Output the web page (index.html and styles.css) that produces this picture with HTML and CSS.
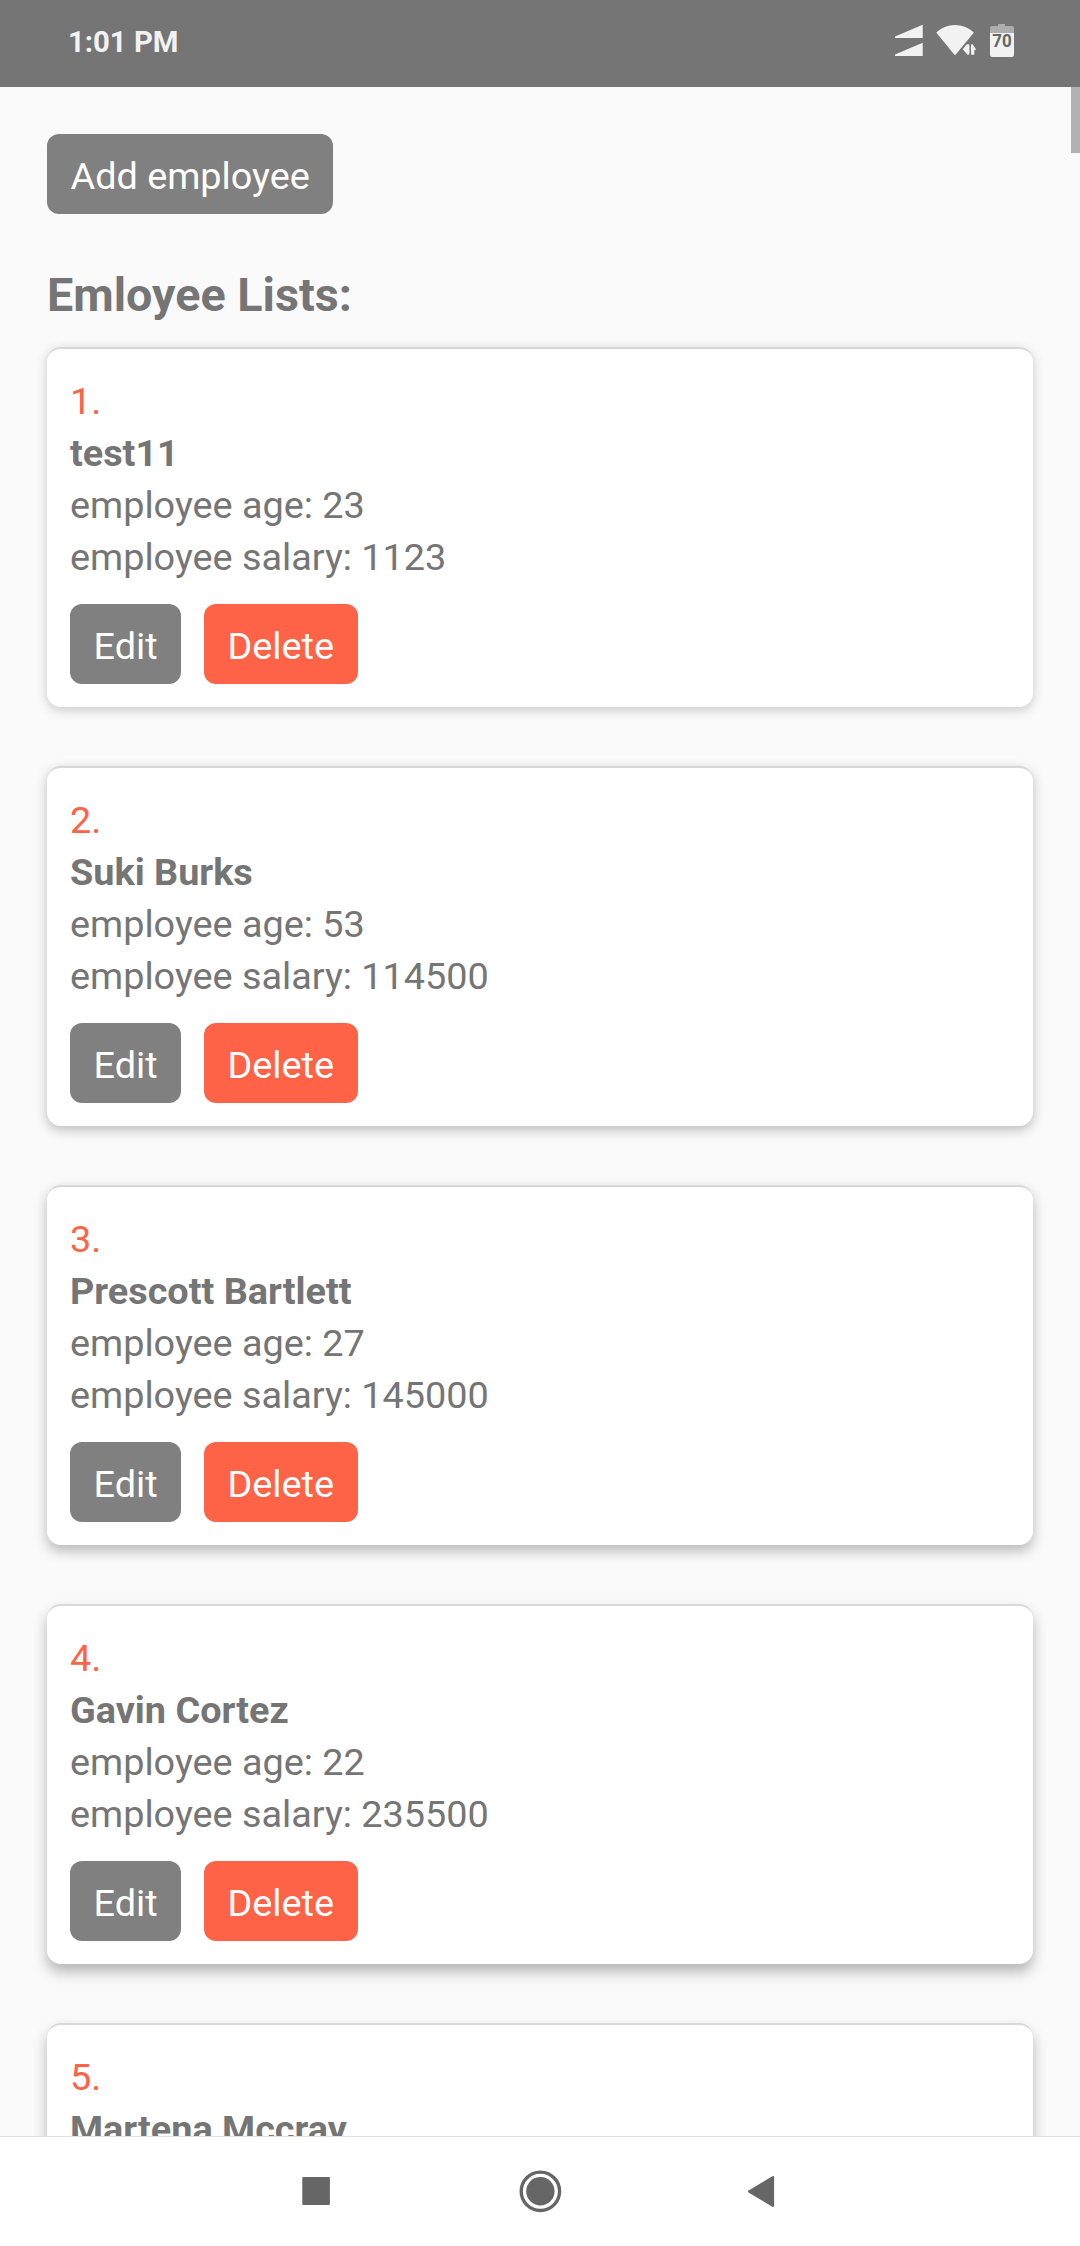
FILE: index.html
```html
<!DOCTYPE html>
<html lang="en">
<head>
<meta charset="utf-8">
<title>Employees</title>
<link rel="stylesheet" href="styles.css">
</head>
<body>
<header class="status">
  <span class="clock">1:01 PM</span>
  <svg class="status-icons" width="124" height="36" viewBox="0 0 124 36">
    <g fill="#f2f2f2">
      <path d="M3 14.500L30.700 2.800V16H3zM3 32.500L30.700 20.800V34H3z"/>
      <path d="M44.200 10.500Q52 3 63 3T81.900 10.500L63.800 32.500Q63 33.300 62.200 32.500z"/>
      <path stroke="#757575" stroke-width="3" d="M70.700 27.300L75.200 22.300H82L84 27.300L82 32.700H75.500z"/>
      <path d="M70.700 27.300L74.700 22.300H77.300V32.700H75.500zM79.200 22.300H80.600L84.300 27.700H82.300V32.700H79.200z"/>
      <path d="M98 11H122V32.500Q122 35 119.500 35H100.500Q98 35 98 32.500z"/>
    </g>
    <path d="M78.250 21.500V33.500" stroke="#757575" stroke-width="1.500"/>
    <path fill="#adadad" d="M98 11V6Q98 4 100 4H106V2H113V4H120Q122 4 122 6V11z"/>
    <text class="battery" x="100.300" y="25" textLength="19.500" lengthAdjust="spacingAndGlyphs">70</text>
  </svg>
</header>
<main class="screen">
  <div class="scrollbar"></div>
  <button class="btn add">Add employee</button>
  <h1 class="title">Emloyee Lists:</h1>
  <section class="list">
    <article class="card">
      <p class="index">1.</p><p class="name">test11</p><p>employee age: 23</p><p>employee salary: 1123</p>
      <div class="actions"><button class="btn">Edit</button><button class="btn danger">Delete</button></div>
    </article>
    <article class="card">
      <p class="index">2.</p><p class="name">Suki Burks</p><p>employee age: 53</p><p>employee salary: 114500</p>
      <div class="actions"><button class="btn">Edit</button><button class="btn danger">Delete</button></div>
    </article>
    <article class="card">
      <p class="index">3.</p><p class="name">Prescott Bartlett</p><p>employee age: 27</p><p>employee salary: 145000</p>
      <div class="actions"><button class="btn">Edit</button><button class="btn danger">Delete</button></div>
    </article>
    <article class="card">
      <p class="index">4.</p><p class="name">Gavin Cortez</p><p>employee age: 22</p><p>employee salary: 235500</p>
      <div class="actions"><button class="btn">Edit</button><button class="btn danger">Delete</button></div>
    </article>
    <article class="card">
      <p class="index">5.</p><p class="name">Martena Mccray</p>
    </article>
  </section>
</main>
<nav class="navbar">
  <svg width="44" height="44" viewBox="0 0 44 44"><rect x="8.300" y="8" width="27.600" height="28" rx="1" fill="#666"/></svg>
  <svg width="44" height="44" viewBox="0 0 44 44"><circle cx="22.400" cy="22.300" r="19.200" fill="none" stroke="#666" stroke-width="3.400"/><circle cx="22.400" cy="22.300" r="14.200" fill="#666"/></svg>
  <svg width="44" height="44" viewBox="0 0 44 44"><path d="M6.600 23.600Q5.200 22.500 6.600 21.400L30.300 7.300Q32.100 6.500 32.100 8.500V36.500Q32.100 38.500 30.300 37.700z" fill="#666"/></svg>
</nav>
</body>
</html>
```
FILE: styles.css
```css
* { box-sizing: border-box; }

body {
  margin: 0;
  height: 2246px;
  display: flex;
  flex-direction: column;
  overflow: hidden;
  background: #fafafa;
  color: #757575;
  font: 37.8px/52px Roboto, sans-serif;
}

.status {
  flex: none;
  height: 87px;
  padding: 0 64px 7px 68px;
  display: flex;
  align-items: center;
  justify-content: space-between;
  background: #757575;
}

.clock {
  padding-top: 4px;
  color: #f2f2f2;
  font-size: 29.300px;
  font-weight: 700;
}

.battery {
  fill: #666;
  font-size: 18.500px;
  font-weight: 700;
}

.screen {
  position: relative;
  flex: none;
  height: 2049px;
  padding: 47px 47px 0;
  overflow: hidden;
}

.scrollbar {
  position: absolute;
  top: 0;
  right: 0;
  width: 9px;
  height: 66px;
  background: #b2b2b2;
}

.btn {
  display: block;
  height: 80px;
  padding: 4px 23.500px 0;
  border: 0;
  border-radius: 12px;
  background: #808080;
  color: #fff;
  font: inherit;
}

.danger { background: #ff6347; }

.title {
  margin: 48px 0 19px;
  font-size: 46.700px;
  line-height: 66px;
  font-weight: 700;
}

.list {
  display: flex;
  flex-direction: column;
  gap: 59px;
}

.card {
  height: 360px;
  padding: 26px 23px 23px;
  border-top: 2px solid #d8d8d8;
  border-radius: 14px;
  background: #fff;
  box-shadow: 0 3px 12px rgba(0, 0, 0, .2);
}

.card:nth-child(2) { box-shadow: 0 4px 12px rgba(0, 0, 0, .25); }
.card:nth-child(3) { box-shadow: 0 6px 13px rgba(0, 0, 0, .27); }
.card:nth-child(n+4) { box-shadow: 0 8px 14px rgba(0, 0, 0, .28); }

.card p { margin: 0; }
.card .index { color: #ff6347; }
.card .name { font-weight: 700; }

.actions {
  display: flex;
  gap: 23px;
  margin-top: 21px;
}

.navbar {
  flex: none;
  height: 110px;
  padding: 32px 294px 0;
  display: flex;
  align-items: flex-start;
  justify-content: space-between;
  border-top: 1px solid #e2e2e2;
  background: #fff;
}
```
